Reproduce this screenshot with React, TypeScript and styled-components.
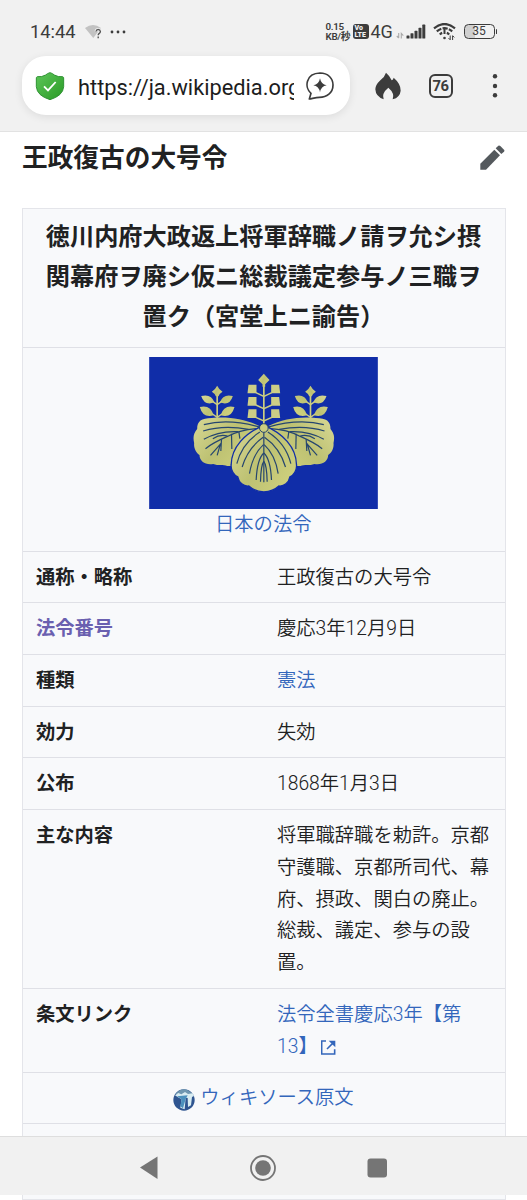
import React from 'react'
import styled, { createGlobalStyle } from 'styled-components'

const GlobalStyle = createGlobalStyle`
  body {
    margin: 0;
    background: #fff;
    color: #202122;
    font-family: Roboto, "Noto Sans CJK JP", sans-serif;
    overflow: hidden;
  }
  svg {
    display: block;
    flex: none;
  }
`

const Screen = styled.div`
  width: 527px;
  height: 1200px;
  display: flex;
  flex-direction: column;
  overflow: hidden;
`

const Browser = styled.header`
  flex: none;
  box-sizing: border-box;
  height: 132px;
  background: #f1f1f1;
  border-bottom: 1px solid #e2e2e2;
`

const StatusBar = styled.div`
  display: flex;
  align-items: center;
  height: 56px;
  padding: 7px 30px 0 30px;
  box-sizing: border-box;
  color: #3c3c3c;
`

const Clock = styled.span`
  width: 55px;
  font-size: 18.3px;
  line-height: 20px;
`

const Speed = styled.div`
  margin-left: auto;
  width: 27px;
  font-size: 9.8px;
  font-weight: 600;
  line-height: 9.4px;
  letter-spacing: -0.3px;
  white-space: nowrap;
`

const VoLte = styled.div`
  width: 16.5px;
  height: 15px;
  border-radius: 3px;
  background: #3c3c3c;
  color: #f1f1f1;
  font-size: 7px;
  font-weight: 900;
  line-height: 6.5px;
  padding: 1px 0 0 2px;
  box-sizing: border-box;
  white-space: nowrap;
`

const Network = styled.span`
  width: 25.5px;
  margin-left: 1.5px;
  font-size: 18px;
  line-height: 20px;
`

const Toolbar = styled.div`
  display: flex;
  align-items: center;
  height: 59px;
  padding-left: 22px;
`

const AddressBar = styled.div`
  display: flex;
  align-items: center;
  box-sizing: border-box;
  width: 328px;
  height: 59px;
  padding: 0 16px 0 13px;
  border-radius: 24px;
  background: #fff;
  box-shadow: 0 2px 9px rgba(0, 0, 0, 0.09);
`

const Url = styled.span`
  width: 216px;
  margin: 5px 12px 0 13px;
  overflow: hidden;
  white-space: nowrap;
  font-size: 21.8px;
  line-height: 30px;
  color: #1d1d1d;
`

const TabCount = styled.div`
  box-sizing: border-box;
  width: 24px;
  height: 24px;
  margin: 0 35px 0 28px;
  border: 2px solid #3c3c3c;
  border-radius: 6px;
  color: #3c3c3c;
  font-size: 14.8px;
  font-weight: 700;
  line-height: 21px;
  letter-spacing: -0.4px;
  text-align: center;
`

const Page = styled.main`
  flex: 1;
  min-height: 0;
  overflow: hidden;
  padding: 0 22px;
`

const TitleRow = styled.div`
  display: flex;
  align-items: center;
  justify-content: space-between;
  height: 52px;
  margin-bottom: 23.6px;
`

const Title = styled.h1`
  margin: 0;
  font-size: 25.7px;
  font-weight: 700;
  line-height: 40px;
`

const Infobox = styled.section`
  width: 484px;
  box-sizing: border-box;
  border: 1.5px solid #e4e5ea;
  background: #f8f9fb;
  font-size: 19.3px;
  line-height: 31.9px;
`

const Caption = styled.h2`
  margin: 0;
  padding: 8px 1px 10px 0;
  font-size: 24.2px;
  font-weight: 700;
  line-height: 40px;
  text-align: center;
`

const Figure = styled.div`
  display: flex;
  flex-direction: column;
  align-items: center;
  box-sizing: border-box;
  height: 204.3px;
  padding: 9px 1.5px 0 0;
  border-top: 1px solid #dfe0e6;
`

const Row = styled.div<{ $center?: boolean }>`
  display: flex;
  justify-content: ${p => (p.$center ? 'center' : 'flex-start')};
  align-items: ${p => (p.$center ? 'center' : 'flex-start')};
  padding: 9.9px 14px 8.8px 13px;
  border-top: 1px solid #dfe0e6;
`

const Label = styled.div<{ $visited?: boolean }>`
  width: 241px;
  flex: none;
  font-weight: 700;
  color: ${p => (p.$visited ? '#6a60b0' : 'inherit')};
`

const Value = styled.div`
  width: 215px;
  font-family: "Roboto Light", Roboto, "Noto Sans CJK JP DemiLight", "Noto Sans CJK JP", sans-serif;
  font-weight: 350;
`

const Link = styled.a`
  color: #3366bb;
  font-weight: 350;
`

const NavBar = styled.nav`
  flex: none;
  display: flex;
  align-items: center;
  box-sizing: border-box;
  height: 59px;
  padding: 4px 0 0 139px;
  background: #f1f1f1;
  border-top: 1px solid #dedede;
`

const PageEdge = styled.div`
  flex: none;
  box-sizing: border-box;
  width: 484px;
  height: 5px;
  margin-left: 22px;
  border: solid #e4e5ea;
  border-width: 0 1.5px 1px;
  background: #f8f9fb;
`

const WeakWifi = () => (
  <svg width="17" height="14" viewBox="0 0 17 14">
    <path d="M0 3Q8 -3 16 3L8.3 13Z" fill="#c2c2c2" />
    <path d="M11 6.5q.3-2 2.2-2t2.2 2q0 1.1-1.1 1.9t-1.1 1.8M13.2 11.6v1.6" fill="none" stroke="#f1f1f1" strokeWidth="3" />
    <path d="M11 6.5q.3-2 2.2-2t2.2 2q0 1.1-1.1 1.9t-1.1 1.8M13.2 11.6v1.6" fill="none" stroke="#555" strokeWidth="1.4" />
  </svg>
)

const Dots = () => (
  <svg width="17" height="4" viewBox="0 0 17 4" style={{ marginLeft: 8 }} fill="#3c3c3c">
    <circle cx="2" cy="2" r="1.4" />
    <circle cx="8" cy="2" r="1.4" />
    <circle cx="14" cy="2" r="1.4" />
  </svg>
)

const Signal = () => (
  <svg width="30" height="16" viewBox="0 0 30 16" fill="#3c3c3c">
    <path d="M2.7 9v5M.8 12l1.9 2M5.3 14.5V9.5l2 2.2" fill="none" stroke="#aaa" strokeWidth="1.1" />
    <rect x="10.5" y="11.4" width="3" height="3.2" rx=".6" />
    <rect x="14.5" y="9.2" width="3" height="5.4" rx=".6" />
    <rect x="18.5" y="6.8" width="3" height="7.8" rx=".6" />
    <rect x="22.5" y="3.8" width="3" height="10.8" rx=".6" />
    <rect x="26.3" y=".6" width="3" height="14" rx=".6" />
  </svg>
)

const Wifi = () => (
  <svg width="23" height="18" viewBox="0 0 23 18" style={{ marginLeft: 7 }} fill="none" stroke="#3c3c3c">
    <path d="M1 5.3Q11.5 -3.3 22 5.3" strokeWidth="2.2" />
    <path d="M3.8 8.4Q11.5 2 19.2 8.4" strokeWidth="2.2" strokeDasharray="5.2 1.3" />
    <path d="M6.8 11.5Q8 10.3 9.2 9.9M13.8 9.9Q15 10.3 16.2 11.5" strokeWidth="2.2" />
    <path d="M11.5 5v6" strokeWidth="2" />
    <circle cx="11.5" cy="15" r="1.3" fill="#3c3c3c" stroke="none" />
    <path d="M17.2 12.5v4.3l-1.7-1.7M19.6 17v-4.3l1.7 1.7" strokeWidth="1" />
  </svg>
)

const BatteryBox = styled.div`
  position: relative;
  box-sizing: border-box;
  width: 31px;
  height: 15px;
  margin: 0 2.5px 0 7.5px;
  border: 1.6px solid #3c3c3c;
  border-radius: 4.5px;
  background: linear-gradient(90deg, #cfcfcf 34%, transparent 34%);
  font-size: 12px;
  line-height: 13.5px;
  text-align: center;
  &::after {
    content: '';
    position: absolute;
    right: -3.6px;
    top: 4px;
    width: 1.6px;
    height: 5px;
    border-radius: 1px;
    background: #3c3c3c;
  }
`

const Shield = () => (
  <svg width="30" height="30" viewBox="104 211 90 90">
    <defs>
      <linearGradient id="shield" x1="0" y1="0" x2="1" y2="1">
        <stop offset="0" stopColor="#5ec65a" />
        <stop offset="1" stopColor="#299a25" />
      </linearGradient>
    </defs>
    <path
      d="M149 216Q157 218 162 223Q174 230 187 228Q191 229 190 235V258Q188 285 149 297Q110 285 108 258V235Q107 229 111 228Q124 230 136 223Q141 218 149 216Z"
      fill="url(#shield)" stroke="#2e9232" strokeWidth="3"
    />
    <path d="M131 257l12 12 23-25" fill="none" stroke="#fff" strokeWidth="5.5" />
  </svg>
)

const Assistant = () => (
  <svg width="28" height="28" viewBox="126 215 84 84">
    <path
      d="M136 296L141 279C121 262 124 219 168 218C192 218 207 234 207 254C207 278 188 291 166 291C156 291 147 294 136 296Z"
      fill="none" stroke="#3c3c3c" strokeWidth="5" strokeLinejoin="round"
    />
    <path d="M168 234Q171 252 188 255Q171 258 168 276Q165 258 148 255Q165 252 168 234Z" fill="#3c3c3c" />
  </svg>
)

const Flame = () => (
  <svg width="26" height="28" viewBox="331 214 78 84" style={{ marginLeft: 24.5 }}>
    <path
      d="M364 216Q376 226 381 239Q386 237 387 231Q409 250 408 270Q406 290 384 296Q391 278 371 261Q350 278 357 296Q333 288 332 266Q332 253 347 239Q360 229 364 216Z"
      fill="#3c3c3c"
    />
  </svg>
)

const MoreIcon = () => (
  <svg width="6" height="26" viewBox="0 0 6 26" fill="#3c3c3c" style={{ marginLeft: 4 }}>
    <circle cx="3" cy="3.3" r="2.2" />
    <circle cx="3" cy="13" r="2.2" />
    <circle cx="3" cy="22.3" r="2.2" />
  </svg>
)

const Pencil = () => (
  <svg width="25" height="26" viewBox="647 74 75 78" fill="#54595d">
    <path d="M648 130L690 88L707 105L665 148H648Z" />
    <path d="M694 84L702 76Q705 74 708 77L719 88Q722 91 719 94L711 101Z" />
  </svg>
)

const sideLeafVeins = [
  'M346 232Q250 204 176 224',
  'M310 238Q235 224 174 243',
  'M342 235Q285 238 245 260Q202 279 181 296',
  'M279 245Q220 242 176 268',
  'M247 258Q224 252 203 266',
  'M259 251L260 297',
  'M281 244L284 266',
  'M229 268L227 303M227 281L196 316M226 281L216 316',
]

const centerVeins = [
  'M356 246V397',
  'M344 246Q290 280 275 341',
  'M368 246Q422 280 437 341',
  'M354 262Q308 294 291 351',
  'M358 262Q404 294 421 351',
  'M355 284Q322 314 313 371',
  'M357 284Q390 314 399 371',
  'M356 309Q336 327 333 390',
  'M356 309Q376 327 379 390',
  'M356 334Q347 345 346 395',
  'M356 334Q365 345 366 395',
]

const SideLeaf = () => (
  <g>
    <path
      d="M342 228C300 207 248 199 200 204C168 204 156 214 156 237C145 250 143 263 147 279C145 294 153 309 163 315C163 334 181 346 204 342C219 348 235 342 246 348H258Q260 300 298 268Q324 252 342 228Z"
      fill="url(#gold)"
    />
    {sideLeafVeins.map(d => (
      <path key={d} d={d} fill="none" stroke="#26466f" strokeWidth="3.6" />
    ))}
    <path d="M216 201V134" stroke="#ccce80" strokeWidth="5" />
    <path d="M216 107Q222 119 232 125Q223 130 220 139H212Q209 130 200 125Q210 119 216 107Z" fill="url(#gold)" />
    <path d="M168 138Q198 130 208 157Q178 169 168 138ZM263 138Q234 130 224 157Q254 169 263 138ZM164 171Q196 163 206 196Q173 206 164 171ZM268 171Q236 163 226 196Q259 206 268 171Z" fill="url(#gold)" />
    <path d="M202 154L216 164L230 154M202 192L216 202L230 192" fill="none" stroke="#ccce80" strokeWidth="4" />
  </g>
)

const Emblem = () => (
  <svg width="229" height="152" viewBox="12 21 686 456">
    <defs>
      <linearGradient id="gold" x1="0" y1="0" x2="1" y2="0.6">
        <stop offset="0" stopColor="#d9d996" />
        <stop offset="0.55" stopColor="#bdc172" />
        <stop offset="1" stopColor="#cdcf7c" />
      </linearGradient>
    </defs>
    <rect x="12" y="21" width="686" height="456" fill="#102da8" />
    <SideLeaf />
    <g transform="translate(712 0) scale(-1 1)">
      <SideLeaf />
    </g>
    <path
      d="M356 226C299 249 259 292 258 344C256 361 267 377 278 381C281 397 295 410 311 408C327 423 342 425 356 426C370 425 385 423 401 408C417 410 431 397 434 381C445 377 456 361 454 344C453 292 413 249 356 226Z"
      fill="url(#gold)" stroke="#102da8" strokeWidth="4"
    />
    {centerVeins.map(d => (
      <path key={d} d={d} fill="none" stroke="#26466f" strokeWidth="3.6" />
    ))}
    <path d="M356 222V96" stroke="#ccce80" strokeWidth="5" />
    <path d="M356 71L373 90L360 103V110H352V103L339 90Z" fill="url(#gold)" />
    {[104, 141, 178].map(y => (
      <g key={y}>
        <path d={`M310 ${y}H334V${y + 26}H307ZM378 ${y}H402L405 ${y + 26}H378Z`} fill="#cdce86" />
        <path d={`M332 ${y + 24}L356 ${y + 35}L380 ${y + 24}`} fill="none" stroke="#ccce80" strokeWidth="4.5" />
      </g>
    ))}
    <circle cx="356" cy="234" r="13" fill="#ccce80" stroke="#26466f" strokeWidth="3" />
  </svg>
)

const ExternalIcon = () => (
  <svg width="15" height="15" viewBox="171 686 45 45" style={{ display: 'inline-block', marginLeft: 3, verticalAlign: -2 }} fill="none" stroke="#3366bb" strokeWidth="4.8">
    <path d="M186 689H173V728H212V714" />
    <path d="M189 713L209 693" />
    <path d="M194 688H214V708Z" fill="#3366bb" stroke="none" />
  </svg>
)

const WikisourceLogo = () => (
  <svg width="22" height="22" viewBox="520 322 66 66" style={{ marginRight: 5, marginTop: 3 }}>
    <circle cx="553" cy="355" r="32" fill="#2f5590" />
    <path d="M526 338Q552 307 580 338Z" fill="#6f97b0" />
    <path d="M526 341L536 334L545 338L556 331L565 337L579 335L583 343L577 346L574 371L565 376L564 349L558 348L555 383L542 378L546 353L535 347Z" fill="#d9edf2" />
    <path d="M532 344L564 341L558 352L550 380L542 374L546 353Z" fill="#4c91bd" />
  </svg>
)

const rows: { label: string; value: React.ReactNode; visited?: boolean }[] = [
  { label: '通称・略称', value: '王政復古の大号令' },
  { label: '法令番号', value: '慶応3年12月9日', visited: true },
  { label: '種類', value: <Link>憲法</Link> },
  { label: '効力', value: '失効' },
  { label: '公布', value: '1868年1月3日' },
  {
    label: '主な内容',
    value: '将軍職辞職を勅許。京都守護職、京都所司代、幕府、摂政、関白の廃止。総裁、議定、参与の設置。',
  },
  { label: '条文リンク', value: <Link>法令全書慶応3年【第<br />13】<ExternalIcon /></Link> },
]

const App: React.FC = () => {
  return (
    <Screen lang="ja">
      <GlobalStyle />
      <Browser>
        <StatusBar>
          <Clock>14:44</Clock>
          <WeakWifi />
          <Dots />
          <Speed>0.15<br />KB/秒</Speed>
          <VoLte>Vo<br />LTE</VoLte>
          <Network>4G</Network>
          <Signal />
          <Wifi />
          <BatteryBox>35</BatteryBox>
        </StatusBar>
        <Toolbar>
          <AddressBar>
            <Shield />
            <Url>https://ja.wikipedia.org</Url>
            <Assistant />
          </AddressBar>
          <Flame />
          <TabCount>76</TabCount>
          <MoreIcon />
        </Toolbar>
      </Browser>
      <Page>
        <TitleRow>
          <Title>王政復古の大号令</Title>
          <Pencil />
        </TitleRow>
        <Infobox>
          <Caption>
            徳川内府大政返上将軍辞職ノ請ヲ允シ摂<br />
            関幕府ヲ廃シ仮ニ総裁議定参与ノ三職ヲ<br />
            置ク（宮堂上ニ諭告）
          </Caption>
          <Figure>
            <Emblem />
            <Link>日本の法令</Link>
          </Figure>
          {rows.map(({ label, value, visited }) => (
            <Row key={label}>
              <Label $visited={visited}>{label}</Label>
              <Value>{value}</Value>
            </Row>
          ))}
          <Row $center>
            <WikisourceLogo />
            <Link>ウィキソース原文</Link>
          </Row>
          <Row />
        </Infobox>
      </Page>
      <NavBar>
        <svg width="250" height="28" viewBox="0 0 250 28" fill="#757575">
          <path d="M1 13.5L18.5 2.5V25Z" />
          <circle cx="124" cy="14" r="12" fill="none" stroke="#757575" strokeWidth="1.8" />
          <circle cx="124" cy="14" r="7.8" />
          <rect x="228.5" y="4.5" width="19.5" height="19" rx="3" />
        </svg>
      </NavBar>
      <PageEdge />
    </Screen>
  )
}

export default App
